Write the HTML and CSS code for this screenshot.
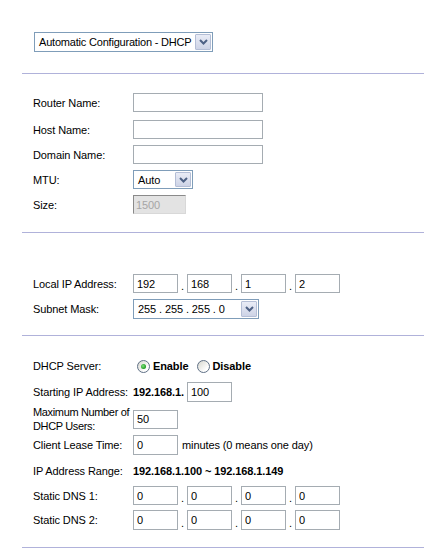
FILE: index.html
```html
<!DOCTYPE html>
<html>
<head>
<meta charset="utf-8">
<link rel="stylesheet" href="styles.css">
</head>
<body>
<div class="page">
  <div class="sec sec-type">
    <div class="select select-type">
      <span class="select-text select-text-tight">Automatic Configuration - DHCP</span>
      <span class="select-btn"><svg width="9" height="6" viewBox="0 0 9 6"><path d="M1 1 L4.5 4.5 L8 1" fill="none" stroke="#4d6185" stroke-width="2"/></svg></span>
    </div>
  </div>
  <div class="rule"></div>

  <div class="sec sec-names">
    <div class="row"><span class="label">Router Name:</span><input class="field field-long" type="text"></div>
    <div class="row row-gap8"><span class="label">Host Name:</span><input class="field field-long" type="text"></div>
    <div class="row row-gap6"><span class="label">Domain Name:</span><input class="field field-long" type="text"></div>
    <div class="row row-gap6"><span class="label">MTU:</span>
      <div class="select select-mtu">
        <span class="select-text">Auto</span>
        <span class="select-btn"><svg width="9" height="6" viewBox="0 0 9 6"><path d="M1 1 L4.5 4.5 L8 1" fill="none" stroke="#4d6185" stroke-width="2"/></svg></span>
      </div>
    </div>
    <div class="row row-gap6"><span class="label">Size:</span><input class="field field-size" type="text" value="1500" disabled></div>
  </div>
  <div class="rule"></div>

  <div class="sec sec-ip">
    <div class="row"><span class="label">Local IP Address:</span>
      <input class="field field-ip" type="text" value="192"><span class="dot">.</span><input class="field field-ip" type="text" value="168"><span class="dot">.</span><input class="field field-ip" type="text" value="1"><span class="dot">.</span><input class="field field-ip" type="text" value="2">
    </div>
    <div class="row row-gap6 row-h20"><span class="label">Subnet Mask:</span>
      <div class="select select-mask">
        <span class="select-text">255 . 255 . 255 . 0</span>
        <span class="select-btn"><svg width="9" height="6" viewBox="0 0 9 6"><path d="M1 1 L4.5 4.5 L8 1" fill="none" stroke="#4d6185" stroke-width="2"/></svg></span>
      </div>
    </div>
  </div>
  <div class="rule"></div>

  <div class="sec sec-dhcp">
    <div class="row row-h20"><span class="label">DHCP Server:</span>
      <span class="radio radio-on"></span><span class="radio-text">Enable</span>
      <span class="radio radio-off"></span><span class="radio-text">Disable</span>
    </div>
    <div class="row row-gap6 row-h20"><span class="label">Starting IP Address:</span><span class="strong">192.168.1.</span><input class="field field-ip field-start" type="text" value="100"></div>
    <div class="row row-max"><span class="label label-nowrap">Maximum Number of<br>DHCP Users:</span><input class="field field-ip" type="text" value="50"></div>
    <div class="row row-gap2 row-h20"><span class="label">Client Lease Time:</span><input class="field field-ip field-h20" type="text" value="0"><span class="note">minutes (0 means one day)</span></div>
    <div class="row row-gap6 row-h20"><span class="label">IP Address Range:</span><span class="strong">192.168.1.100 ~ 192.168.1.149</span></div>
    <div class="row row-gap5"><span class="label">Static DNS 1:</span>
      <input class="field field-ip" type="text" value="0"><span class="dot">.</span><input class="field field-ip" type="text" value="0"><span class="dot">.</span><input class="field field-ip" type="text" value="0"><span class="dot">.</span><input class="field field-ip" type="text" value="0">
    </div>
    <div class="row row-gap5 row-h20"><span class="label">Static DNS 2:</span>
      <input class="field field-ip field-h20" type="text" value="0"><span class="dot">.</span><input class="field field-ip field-h20" type="text" value="0"><span class="dot">.</span><input class="field field-ip field-h20" type="text" value="0"><span class="dot">.</span><input class="field field-ip field-h20" type="text" value="0">
    </div>
  </div>
  <div class="rule"></div>
</div>
</body>
</html>
```

FILE: styles.css
```css
html, body {
  margin: 0;
  padding: 0;
  background: #ffffff;
}
body {
  font-family: "Liberation Sans", Arial, sans-serif;
  font-size: 11px;
  letter-spacing: -0.1px;
  color: #000000;
}
.page {
  padding-left: 22px;
}
.rule {
  height: 0;
  border-top: 1px solid #b0b2da;
}
.sec {
  padding-left: 11px;
}
.sec-type {
  padding-top: 32px;
  padding-bottom: 21px;
  padding-left: 12px;
}
.sec-names {
  padding-top: 19px;
  padding-bottom: 18px;
}
.sec-ip {
  padding-top: 41px;
  padding-bottom: 16px;
}
.sec-dhcp {
  padding-top: 20px;
  padding-bottom: 17px;
}
.row {
  display: flex;
  align-items: center;
  height: 19px;
}
.row-h20 { height: 20px; }
.row-gap8 { margin-top: 8px; }
.row-gap6 { margin-top: 6px; }
.row-gap5 { margin-top: 5px; }
.row-gap2 { margin-top: 2px; }
.row-max {
  margin-top: 3px;
  height: 28px;
}
.label {
  width: 100px;
  flex: none;
  line-height: 14px;
}
.label-nowrap {
  white-space: nowrap;
  letter-spacing: -0.35px;
}
.field {
  box-sizing: border-box;
  height: 19px;
  border: 1px solid #a5acb2;
  background: #ffffff;
  font-family: "Liberation Sans", Arial, sans-serif;
  font-size: 11px;
  letter-spacing: -0.1px;
  color: #000000;
  padding: 0 3px;
  margin: 0;
  outline: none;
}
.field-h20 { height: 20px; }
.field-long { width: 130px; }
.field-ip { width: 45px; }
.field-start {
  margin-left: 3px;
  height: 20px;
}
.field-size {
  width: 53px;
  background: #e3e3e3;
  border-color: #8a8a8a #d8d8d8 #d8d8d8 #8a8a8a;
  color: #a6a6a6;
  padding-left: 2px;
}
.dot {
  width: 9px;
  flex: none;
  text-align: center;
  align-self: flex-end;
  line-height: 13px;
}
.select {
  box-sizing: border-box;
  display: flex;
  align-items: center;
  border: 1px solid #7f9db9;
  background: #ffffff;
  height: 20px;
  padding: 1px;
}
.select-type { width: 179px; }
.select-mtu { width: 60px; height: 19px; }
.select-mask { width: 126px; }
.select-text {
  flex: 1;
  min-width: 0;
  overflow: hidden;
  padding-left: 3px;
  white-space: nowrap;
}
.select-text-tight {
  letter-spacing: -0.2px;
}
.select-btn {
  box-sizing: border-box;
  flex: none;
  width: 16px;
  height: 100%;
  display: flex;
  align-items: center;
  justify-content: center;
  background: linear-gradient(#e9ecf6, #cdd3e6);
  border: 1px solid #b4bed6;
  border-radius: 1px;
}
.radio {
  box-sizing: border-box;
  width: 13px;
  height: 13px;
  border-radius: 50%;
  border: 1px solid #5f7086;
  background: linear-gradient(135deg, #d6d6ce, #ffffff 75%);
  flex: none;
  display: flex;
  align-items: center;
  justify-content: center;
}
.radio-on { margin-left: 4px; }
.radio-on::after {
  content: "";
  width: 5px;
  height: 5px;
  border-radius: 50%;
  background: radial-gradient(circle at 40% 40%, #7ee07e, #1e9a1e 70%);
}
.radio-off { margin-left: 9px; }
.radio-text {
  font-weight: bold;
  margin-left: 3px;
  font-size: 11px;
}
.radio-off + .radio-text { margin-left: 2px; }
.strong {
  font-weight: bold;
  white-space: nowrap;
}
.note {
  margin-left: 4px;
  white-space: nowrap;
}
```
